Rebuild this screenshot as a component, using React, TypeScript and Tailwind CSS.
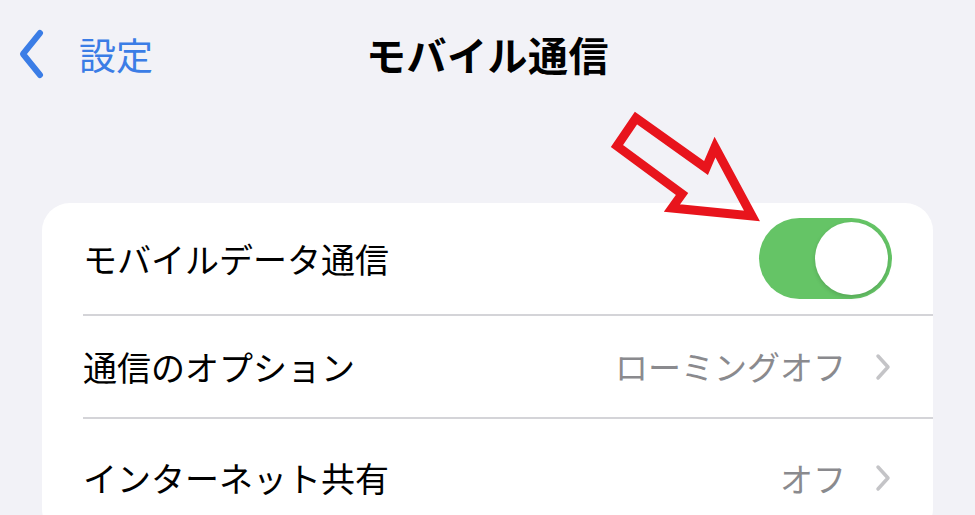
import React from "react";

const font = { fontFamily: '"Noto Sans CJK JP", "Noto Sans", sans-serif' };

function Chevron() {
  return (
    <svg width="18" height="28" viewBox="0 0 18 28" className="ml-[28px]">
      <polyline points="4,3 14,14 4,25" fill="none" stroke="#c4c4c7" strokeWidth="3.5" strokeLinecap="round" strokeLinejoin="round" />
    </svg>
  );
}

export default function App() {
  return (
    <div className="relative w-[975px] h-[515px] overflow-hidden bg-[#f2f2f7]" style={font}>
      <div className="grid grid-cols-[1fr_auto_1fr] items-center h-[108px]">
        <div className="flex items-center pl-[19px]">
          <svg width="26" height="52" viewBox="0 0 26 52">
            <polyline points="21,5 4,26 21,47" fill="none" stroke="#3b7de6" strokeWidth="6" strokeLinecap="round" strokeLinejoin="round" />
          </svg>
          <span className="ml-[34px] text-[37px] leading-none text-[#3b7de6]">設定</span>
        </div>
        <div className="text-[40px] font-bold leading-none tracking-[0.5px] text-black">モバイル通信</div>
        <div />
      </div>
      <div className="mx-[42px] mt-[95px] rounded-[28px] bg-white">
        <div className="pl-[41px]">
          <div className="flex h-[113px] items-center justify-between border-b-2 border-[#d4d4d8] pr-[41px]">
            <span className="text-[34px] leading-none text-black">モバイルデータ通信</span>
            <div className="flex h-[81px] w-[133px] items-center justify-end rounded-full bg-[#65c466] pr-[4px]">
              <div className="h-[73px] w-[73px] rounded-full bg-white shadow-[0_2px_4px_rgba(0,0,0,0.15)]" />
            </div>
          </div>
        </div>
        <div className="pl-[41px]">
          <div className="flex h-[103px] items-center justify-between border-b-2 border-[#d4d4d8] pr-[41px]">
            <span className="text-[34px] leading-none text-black">通信のオプション</span>
            <div className="flex items-center">
              <span className="text-[33px] leading-none text-[#8a8a8e]">ローミングオフ</span>
              <Chevron />
            </div>
          </div>
        </div>
        <div className="pl-[41px]">
          <div className="flex h-[118px] items-center justify-between pr-[41px]">
            <span className="text-[34px] leading-none text-black">インターネット共有</span>
            <div className="flex items-center">
              <span className="text-[33px] leading-none text-[#8a8a8e]">オフ</span>
              <Chevron />
            </div>
          </div>
        </div>
      </div>
      <svg className="absolute left-0 top-0" width="975" height="515" viewBox="0 0 975 515">
        <polygon
          points="636,118 617,146 682,194 672,208 752,216 715,147 706,168"
          fill="none"
          stroke="#e8141c"
          strokeWidth="9"
          strokeLinejoin="miter"
        />
      </svg>
    </div>
  );
}
